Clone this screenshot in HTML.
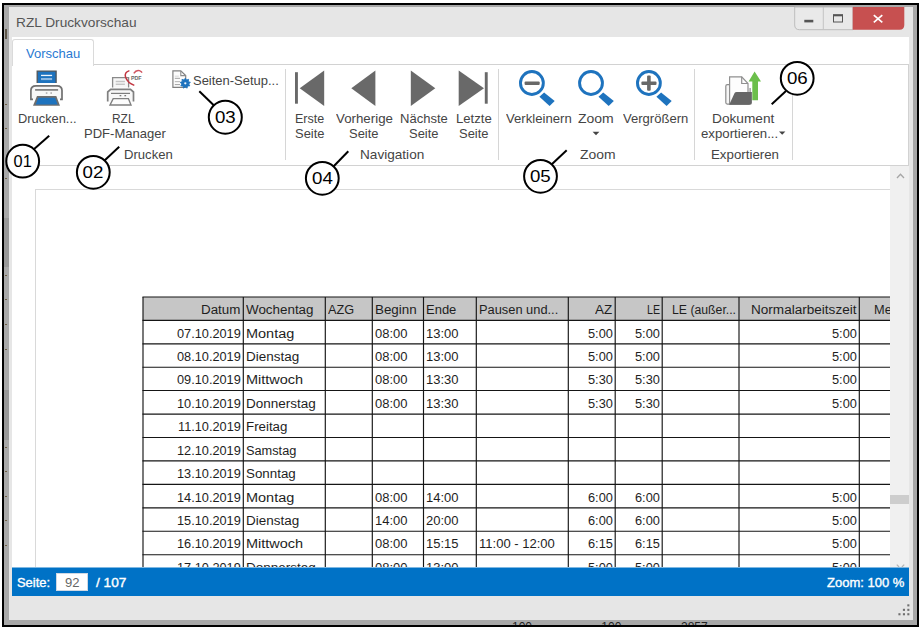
<!DOCTYPE html>
<html lang="de">
<head>
<meta charset="utf-8">
<title>RZL Druckvorschau</title>
<style>
html,body{margin:0;padding:0;background:#fff;}
body{width:922px;height:630px;position:relative;overflow:hidden;font-family:"Liberation Sans",sans-serif;}
.abs{position:absolute;}
.t{position:absolute;white-space:nowrap;line-height:20px;transform-origin:0 50%;font-family:"Liberation Sans",sans-serif;}
.tt{font-size:12.3px;color:#1e1e1e;}
.sb{-webkit-text-stroke:0.35px #fff;}
#frame{left:2px;top:3px;width:913px;height:620px;border:2px solid #000;background:#a8a8a8;}
#win{left:8.5px;top:7px;width:904px;height:613.3px;background:#e6e6e6;}
#client{left:12px;top:37px;width:897px;height:559.2px;background:#fff;}
#tab{left:12.4px;top:39px;width:79.3px;height:26px;border:1px solid #dadada;border-bottom:none;border-radius:3px 3px 0 0;background:#fff;}
#ribbon{left:12px;top:64px;width:896px;height:100px;border-top:1px solid #d2d2d2;border-bottom:1px solid #d2d2d2;border-right:1px solid #d2d2d2;}
.sep{position:absolute;top:69px;width:1px;height:91px;background:#d6d6d6;}
#viewer{left:12px;top:166px;width:878.3px;height:401.5px;overflow:hidden;background:#fff;}
#page{left:22.5px;top:23px;width:900px;height:500px;border-left:1px solid #d9d9d9;border-top:1px solid #d9d9d9;}
.hdr{position:absolute;background:#c6c6c6;}
.hl{position:absolute;height:1px;background:#1a1a1a;}
.vl{position:absolute;width:1px;background:#1a1a1a;}
#scroll{left:890.3px;top:166px;width:18.7px;height:401.5px;background:#f0f0f0;}
#thumb{left:890.3px;top:495px;width:18.7px;height:8.5px;background:#cdcdcd;}
#status{left:12px;top:567px;width:897px;height:28.2px;background:#0072c6;border-top:1px solid #7fb8e2;box-sizing:content-box;}
#pageinput{left:55.8px;top:572.5px;width:32.5px;height:18.3px;background:#fff;box-shadow:inset 0 0 0 1px #cfd8e3;}
#wbtns{left:794.7px;top:7px;width:109.6px;height:23px;}
</style>
</head>
<body>
<div id="frame" class="abs"></div>
<!-- background strip details -->
<div class="abs" style="left:4px;top:218px;width:4.5px;height:49px;background:#989898"></div>
<div class="abs" style="left:4px;top:390px;width:4.5px;height:50px;background:#989898"></div>
<div class="abs" style="left:4.6px;top:28.5px;width:2.6px;height:10px;background:#5e5648"></div>
<div class="abs" style="left:5px;top:103.5px;width:2.2px;height:1px;background:#6e5f45"></div>
<div class="abs" style="left:5px;top:127.5px;width:2.2px;height:1px;background:#6e5f45"></div>
<div class="abs" style="left:5px;top:177.5px;width:2.2px;height:1px;background:#6e5f45"></div>
<div class="abs" style="left:5px;top:275.0px;width:2.2px;height:1px;background:#6e5f45"></div>
<div class="abs" style="left:5px;top:299.1px;width:2.2px;height:1px;background:#6e5f45"></div>
<div class="abs" style="left:5px;top:324.1px;width:2.2px;height:1px;background:#6e5f45"></div>
<div class="abs" style="left:5px;top:348.5px;width:2.2px;height:1px;background:#6e5f45"></div>
<div class="abs" style="left:5px;top:446.5px;width:2.2px;height:1px;background:#6e5f45"></div>
<div class="abs" style="left:5px;top:471.0px;width:2.2px;height:1px;background:#6e5f45"></div>
<div class="abs" style="left:5px;top:495.5px;width:2.2px;height:1px;background:#6e5f45"></div>
<div class="abs" style="left:5px;top:520.0px;width:2.2px;height:1px;background:#6e5f45"></div>
<div class="abs" style="left:5px;top:544.5px;width:2.2px;height:1px;background:#6e5f45"></div>
<div id="win" class="abs"></div>
<div id="client" class="abs"></div>
<div id="ribbon" class="abs"></div>
<div id="tab" class="abs"></div>
<div class="sep" style="left:285.3px"></div>
<div class="sep" style="left:497.8px"></div>
<div class="sep" style="left:694px"></div>
<div class="sep" style="left:792px"></div>

<div id="viewer" class="abs">
  <div id="page" class="abs"></div>
<svg class="abs" style="left:0;top:0" width="879" height="402" viewBox="12 166 879 402">
<rect x="143" y="297" width="757" height="23.3" fill="#c6c6c6"/>
<g stroke="#151515" stroke-width="1.15">
<line x1="142.45" y1="297" x2="900" y2="297"/>
<line x1="142.45" y1="320.3" x2="900" y2="320.3"/>
<line x1="142.45" y1="343.8" x2="900" y2="343.8"/>
<line x1="142.45" y1="367.2" x2="900" y2="367.2"/>
<line x1="142.45" y1="390.5" x2="900" y2="390.5"/>
<line x1="142.45" y1="414.1" x2="900" y2="414.1"/>
<line x1="142.45" y1="437.5" x2="900" y2="437.5"/>
<line x1="142.45" y1="460.8" x2="900" y2="460.8"/>
<line x1="142.45" y1="484.4" x2="900" y2="484.4"/>
<line x1="142.45" y1="507.8" x2="900" y2="507.8"/>
<line x1="142.45" y1="531.2" x2="900" y2="531.2"/>
<line x1="142.45" y1="554.7" x2="900" y2="554.7"/>
<line x1="142.45" y1="578" x2="900" y2="578"/>
<line x1="143" y1="297" x2="143" y2="580"/>
<line x1="243.3" y1="297" x2="243.3" y2="580"/>
<line x1="325.3" y1="297" x2="325.3" y2="580"/>
<line x1="372.3" y1="297" x2="372.3" y2="580"/>
<line x1="423.5" y1="297" x2="423.5" y2="580"/>
<line x1="476.3" y1="297" x2="476.3" y2="580"/>
<line x1="568.3" y1="297" x2="568.3" y2="580"/>
<line x1="615.2" y1="297" x2="615.2" y2="580"/>
<line x1="662.2" y1="297" x2="662.2" y2="580"/>
<line x1="739" y1="297" x2="739" y2="580"/>
<line x1="859.3" y1="297" x2="859.3" y2="580"/>
<line x1="960" y1="297" x2="960" y2="580"/>
</g></svg>
<span class="t tt" style="left:189.33px;top:134px;transform:scaleX(1.0870)">Datum</span>
<span class="t tt" style="left:234.10px;top:134px;transform:scaleX(1.0890)">Wochentag</span>
<span class="t tt" style="left:316.10px;top:134px;transform:scaleX(1.0309)">AZG</span>
<span class="t tt" style="left:363.10px;top:134px;transform:scaleX(1.0877)">Beginn</span>
<span class="t tt" style="left:414.30px;top:134px;transform:scaleX(1.0569)">Ende</span>
<span class="t tt" style="left:467.10px;top:134px;transform:scaleX(1.0441)">Pausen und...</span>
<span class="t tt" style="left:583.39px;top:134px;transform:scaleX(1.0951)">AZ</span>
<span class="t tt" style="left:634.56px;top:134px;transform:scaleX(0.8667)">LE</span>
<span class="t tt" style="left:660.41px;top:134px;transform:scaleX(0.9960)">LE (außer...</span>
<span class="t tt" style="left:739.19px;top:134px;transform:scaleX(1.1026)">Normalarbeitszeit</span>
<span class="t tt" style="left:861.66px;top:134px;transform:scaleX(1.0390)">Mehrarbeit</span>
<span class="t tt" style="left:164.92px;top:158px;transform:scaleX(1.0364)">07.10.2019</span>
<span class="t tt" style="left:234.10px;top:158px;transform:scaleX(1.1771)">Montag</span>
<span class="t tt" style="left:363.10px;top:158px;transform:scaleX(1.0555)">08:00</span>
<span class="t tt" style="left:414.30px;top:158px;transform:scaleX(1.0555)">13:00</span>
<span class="t tt" style="left:575.73px;top:158px;transform:scaleX(1.0391)">5:00</span>
<span class="t tt" style="left:622.73px;top:158px;transform:scaleX(1.0391)">5:00</span>
<span class="t tt" style="left:819.83px;top:158px;transform:scaleX(1.0391)">5:00</span>
<span class="t tt" style="left:164.92px;top:181px;transform:scaleX(1.0364)">08.10.2019</span>
<span class="t tt" style="left:234.10px;top:181px;transform:scaleX(1.0952)">Dienstag</span>
<span class="t tt" style="left:363.10px;top:181px;transform:scaleX(1.0555)">08:00</span>
<span class="t tt" style="left:414.30px;top:181px;transform:scaleX(1.0555)">13:00</span>
<span class="t tt" style="left:575.73px;top:181px;transform:scaleX(1.0391)">5:00</span>
<span class="t tt" style="left:622.73px;top:181px;transform:scaleX(1.0391)">5:00</span>
<span class="t tt" style="left:819.83px;top:181px;transform:scaleX(1.0391)">5:00</span>
<span class="t tt" style="left:164.92px;top:204px;transform:scaleX(1.0364)">09.10.2019</span>
<span class="t tt" style="left:234.10px;top:204px;transform:scaleX(1.1765)">Mittwoch</span>
<span class="t tt" style="left:363.10px;top:204px;transform:scaleX(1.0555)">08:00</span>
<span class="t tt" style="left:414.30px;top:204px;transform:scaleX(1.0555)">13:30</span>
<span class="t tt" style="left:575.73px;top:204px;transform:scaleX(1.0391)">5:30</span>
<span class="t tt" style="left:622.73px;top:204px;transform:scaleX(1.0391)">5:30</span>
<span class="t tt" style="left:819.83px;top:204px;transform:scaleX(1.0391)">5:00</span>
<span class="t tt" style="left:164.92px;top:228px;transform:scaleX(1.0364)">10.10.2019</span>
<span class="t tt" style="left:234.10px;top:228px;transform:scaleX(1.0980)">Donnerstag</span>
<span class="t tt" style="left:363.10px;top:228px;transform:scaleX(1.0555)">08:00</span>
<span class="t tt" style="left:414.30px;top:228px;transform:scaleX(1.0555)">13:30</span>
<span class="t tt" style="left:575.73px;top:228px;transform:scaleX(1.0391)">5:30</span>
<span class="t tt" style="left:622.73px;top:228px;transform:scaleX(1.0391)">5:30</span>
<span class="t tt" style="left:819.83px;top:228px;transform:scaleX(1.0391)">5:00</span>
<span class="t tt" style="left:165.85px;top:251px;transform:scaleX(1.0364)">11.10.2019</span>
<span class="t tt" style="left:234.10px;top:251px;transform:scaleX(1.0822)">Freitag</span>
<span class="t tt" style="left:164.92px;top:275px;transform:scaleX(1.0364)">12.10.2019</span>
<span class="t tt" style="left:234.10px;top:275px;transform:scaleX(1.0370)">Samstag</span>
<span class="t tt" style="left:164.92px;top:298px;transform:scaleX(1.0364)">13.10.2019</span>
<span class="t tt" style="left:234.10px;top:298px;transform:scaleX(1.0854)">Sonntag</span>
<span class="t tt" style="left:164.92px;top:322px;transform:scaleX(1.0364)">14.10.2019</span>
<span class="t tt" style="left:234.10px;top:322px;transform:scaleX(1.1771)">Montag</span>
<span class="t tt" style="left:363.10px;top:322px;transform:scaleX(1.0555)">08:00</span>
<span class="t tt" style="left:414.30px;top:322px;transform:scaleX(1.0555)">14:00</span>
<span class="t tt" style="left:575.73px;top:322px;transform:scaleX(1.0391)">6:00</span>
<span class="t tt" style="left:622.73px;top:322px;transform:scaleX(1.0391)">6:00</span>
<span class="t tt" style="left:819.83px;top:322px;transform:scaleX(1.0391)">5:00</span>
<span class="t tt" style="left:164.92px;top:345px;transform:scaleX(1.0364)">15.10.2019</span>
<span class="t tt" style="left:234.10px;top:345px;transform:scaleX(1.0952)">Dienstag</span>
<span class="t tt" style="left:363.10px;top:345px;transform:scaleX(1.0555)">14:00</span>
<span class="t tt" style="left:414.30px;top:345px;transform:scaleX(1.0555)">20:00</span>
<span class="t tt" style="left:575.73px;top:345px;transform:scaleX(1.0391)">6:00</span>
<span class="t tt" style="left:622.73px;top:345px;transform:scaleX(1.0391)">6:00</span>
<span class="t tt" style="left:819.83px;top:345px;transform:scaleX(1.0391)">5:00</span>
<span class="t tt" style="left:164.92px;top:368px;transform:scaleX(1.0364)">16.10.2019</span>
<span class="t tt" style="left:234.10px;top:368px;transform:scaleX(1.1765)">Mittwoch</span>
<span class="t tt" style="left:363.10px;top:368px;transform:scaleX(1.0555)">08:00</span>
<span class="t tt" style="left:414.30px;top:368px;transform:scaleX(1.0555)">15:15</span>
<span class="t tt" style="left:467.10px;top:368px;transform:scaleX(1.0591)">11:00 - 12:00</span>
<span class="t tt" style="left:575.73px;top:368px;transform:scaleX(1.0391)">6:15</span>
<span class="t tt" style="left:622.73px;top:368px;transform:scaleX(1.0391)">6:15</span>
<span class="t tt" style="left:819.83px;top:368px;transform:scaleX(1.0391)">5:00</span>
<span class="t tt" style="left:164.92px;top:392px;transform:scaleX(1.0364)">17.10.2019</span>
<span class="t tt" style="left:234.10px;top:392px;transform:scaleX(1.0980)">Donnerstag</span>
<span class="t tt" style="left:363.10px;top:392px;transform:scaleX(1.0555)">08:00</span>
<span class="t tt" style="left:414.30px;top:392px;transform:scaleX(1.0555)">13:00</span>
<span class="t tt" style="left:575.73px;top:392px;transform:scaleX(1.0391)">5:00</span>
<span class="t tt" style="left:622.73px;top:392px;transform:scaleX(1.0391)">5:00</span>
<span class="t tt" style="left:819.83px;top:392px;transform:scaleX(1.0391)">5:00</span>
</div>
<div id="scroll" class="abs"></div>
<div id="thumb" class="abs"></div>
<div id="status" class="abs"></div>
<div id="pageinput" class="abs"></div>

<span class="t " style="left:16.29px;top:13px;transform:scaleX(1.1058);font-size:12.4px;color:#555">RZL Druckvorschau</span>
<span class="t " style="left:26.35px;top:44px;transform:scaleX(1.0104);font-size:12.9px;color:#2a7ad2">Vorschau</span>
<span class="t " style="left:17.95px;top:109px;transform:scaleX(1.0542);font-size:12.2px;color:#444">Drucken...</span>
<span class="t " style="left:112.22px;top:109px;transform:scaleX(0.9793);font-size:12.2px;color:#444">RZL</span>
<span class="t " style="left:83.63px;top:124px;transform:scaleX(1.0702);font-size:12.2px;color:#444">PDF-Manager</span>
<span class="t " style="left:123.83px;top:145px;transform:scaleX(1.0743);font-size:12.2px;color:#444">Drucken</span>
<span class="t " style="left:192.87px;top:71px;transform:scaleX(1.0646);font-size:12.2px;color:#444">Seiten-Setup...</span>
<span class="t " style="left:294.97px;top:109px;transform:scaleX(1.0259);font-size:12.2px;color:#444">Erste</span>
<span class="t " style="left:295.47px;top:124px;transform:scaleX(1.0617);font-size:12.2px;color:#444">Seite</span>
<span class="t " style="left:336.23px;top:109px;transform:scaleX(1.0913);font-size:12.2px;color:#444">Vorherige</span>
<span class="t " style="left:349.37px;top:124px;transform:scaleX(1.0617);font-size:12.2px;color:#444">Seite</span>
<span class="t " style="left:400.43px;top:109px;transform:scaleX(1.0682);font-size:12.2px;color:#444">Nächste</span>
<span class="t " style="left:409.37px;top:124px;transform:scaleX(1.0617);font-size:12.2px;color:#444">Seite</span>
<span class="t " style="left:455.92px;top:109px;transform:scaleX(1.0772);font-size:12.2px;color:#444">Letzte</span>
<span class="t " style="left:459.37px;top:124px;transform:scaleX(1.0617);font-size:12.2px;color:#444">Seite</span>
<span class="t " style="left:360.38px;top:145px;transform:scaleX(1.1157);font-size:12.2px;color:#444">Navigation</span>
<span class="t " style="left:505.73px;top:109px;transform:scaleX(1.0783);font-size:12.2px;color:#444">Verkleinern</span>
<span class="t " style="left:578.21px;top:109px;transform:scaleX(1.1471);font-size:12.2px;color:#444">Zoom</span>
<span class="t " style="left:622.93px;top:109px;transform:scaleX(1.0700);font-size:12.2px;color:#444">Vergrößern</span>
<span class="t " style="left:579.61px;top:145px;transform:scaleX(1.1405);font-size:12.2px;color:#444">Zoom</span>
<span class="t " style="left:712.08px;top:109px;transform:scaleX(1.1229);font-size:12.2px;color:#444">Dokument</span>
<span class="t " style="left:701.46px;top:124px;transform:scaleX(1.0849);font-size:12.2px;color:#444">exportieren...</span>
<span class="t " style="left:710.91px;top:145px;transform:scaleX(1.0909);font-size:12.2px;color:#444">Exportieren</span>
<span class="t sb" style="left:16.87px;top:573px;transform:scaleX(1.0610);font-size:12.2px;color:#fff">Seite:</span>
<span class="t " style="left:65.46px;top:573px;transform:scaleX(1.0720);font-size:12.2px;color:#666">92</span>
<span class="t sb" style="left:96.00px;top:573px;transform:scaleX(1.1208);font-size:12.2px;color:#fff">/ 107</span>
<span class="t sb" style="left:827.13px;top:573px;transform:scaleX(1.0676);font-size:12.2px;color:#fff">Zoom: 100 %</span>
<div class="abs" style="left:9px;top:620.6px;width:903px;height:4px;overflow:hidden">
  <span class="t" style="left:503px;top:-4px;font-size:12px;color:#222">100</span>
  <span class="t" style="left:585px;top:-4px;font-size:12px;color:#222">- 100</span>
  <span class="t" style="left:672px;top:-4px;font-size:12px;color:#222">2857</span>
</div>

<!-- icons + window buttons + annotations -->
<svg class="abs" style="left:0;top:0" width="922" height="630" viewBox="0 0 922 630">
  <!-- window buttons -->
  <path d="M794.7 7 V25 Q794.7 29.7 799.5 29.7 H853 V7 Z" fill="#e9e9e9" stroke="#bdbdbd" stroke-width="1"/>
  <line x1="823.3" y1="7" x2="823.3" y2="29.5" stroke="#c4c4c4" stroke-width="1"/>
  <path d="M852.7 7 H904.3 V25 Q904.3 29.7 899.5 29.7 H852.7 Z" fill="#c75050"/>
  <rect x="804.3" y="19.8" width="9" height="2.6" fill="#555"/>
  <rect x="833.5" y="15" width="9" height="7" fill="none" stroke="#555" stroke-width="1"/>
  <rect x="833" y="14.3" width="10" height="2" fill="#555"/>
  <path d="M873.8 15.2 L882.3 22.4 M882.3 15.2 L873.8 22.4" stroke="#fff" stroke-width="1.7" fill="none"/>

  <!-- print icon -->
  <g id="ic-print">
    <path d="M37.2 83 V71.1 H56.1 V83" fill="#1e73be" stroke="#4f5458" stroke-width="1.3"/>
    <rect x="41" y="74.8" width="11.1" height="1.3" fill="#f2f6fb"/>
    <rect x="41" y="78" width="11.1" height="2.1" fill="#8db9e2"/>
    <path d="M33 99.4 H30.9 V90.5 Q30.9 85.8 36 85.8 H57 Q62 85.8 62 90.5 V99.4 H60" fill="#f7f7f7" stroke="#707070" stroke-width="1.7"/>
    <rect x="35.1" y="89" width="23" height="1.8" fill="#858585"/>
    <rect x="45.8" y="92.3" width="1.6" height="1.5" fill="#aaa"/>
    <rect x="50.4" y="92.3" width="1.6" height="1.5" fill="#aaa"/>
    <path d="M37 95.9 H56.3 L60 105.8 H33 Z" fill="#6e6e6e"/>
    <path d="M38.3 97.7 H55.1 L57.6 104.4 H35.7 Z" fill="#1e73be"/>
  </g>
  <!-- pdf manager icon -->
  <g id="ic-pdf">
    <path d="M112.6 87.6 V77.6 H128.6 V87.6" fill="#f6f6f6" stroke="#8a8a8a" stroke-width="1.3"/>
    <rect x="115.7" y="80.8" width="9.2" height="1.4" fill="#c4c4c4"/>
    <rect x="115.7" y="83.7" width="9.2" height="1" fill="#b0b0b0"/>
    <path d="M107.7 101.6 V92 L110.7 89.4 H130.5 L133.5 92 V101.6" fill="#f7f7f7" stroke="#808080" stroke-width="1.7"/>
    <rect x="111" y="92.8" width="19" height="1.2" fill="#7c7c7c"/>
    <rect x="119.6" y="95" width="1.7" height="1.3" fill="#777"/>
    <rect x="124.4" y="95" width="1.7" height="1.3" fill="#777"/>
    <path d="M113.2 98.6 H128.4 L131 105 H110 Z" fill="#fdfdfd" stroke="#808080" stroke-width="1.4"/>
    <path d="M129.4 70.6 Q124 72.2 125.6 77.2 Q127.6 82.8 134.3 85.4" fill="none" stroke="#c23540" stroke-width="1.5"/>
    <path d="M133.8 73.4 Q136.2 69.6 139.4 70.6 Q141.4 71.2 142 72.6" fill="none" stroke="#d05560" stroke-width="1.5"/>
    <text x="131" y="80.2" font-family="Liberation Sans, sans-serif" font-size="5.6" font-weight="700" fill="#666" textLength="10.6" lengthAdjust="spacingAndGlyphs">PDF</text>
  </g>
  <!-- page setup icon -->
  <g id="ic-setup">
    <path d="M172.9 70.9 H180.8 L185.7 75.6 V87.3 H172.9 Z" fill="#fcfcfc" stroke="#808080" stroke-width="1.2"/>
    <path d="M180.8 70.9 V75.6 H185.7" fill="none" stroke="#8c8c8c" stroke-width="1.1"/>
    <rect x="174.8" y="75.7" width="4" height="0.9" fill="#d5d5d5"/>
    <rect x="174.8" y="77.8" width="5.2" height="1.1" fill="#aaa"/>
    <rect x="174.8" y="81" width="5.2" height="1.2" fill="#bdbdbd"/>
    <rect x="174.8" y="84" width="5.2" height="1.1" fill="#aaa"/>
    <polygon points="185.30,78.10 186.50,80.01 188.64,79.32 188.33,81.55 190.42,82.40 188.75,83.91 189.80,85.90 187.55,85.98 187.08,88.19 185.30,86.80 183.52,88.19 183.05,85.98 180.80,85.90 181.85,83.91 180.18,82.40 182.27,81.55 181.96,79.32 184.10,80.01" fill="#1e73be" stroke="#1e73be" stroke-width="0.8" stroke-linejoin="round"/>
    <circle cx="185.3" cy="83.3" r="1.15" fill="#eef4fb"/>
  </g>
  <!-- navigation icons -->
  <g fill="#696969">
    <rect x="295" y="72.2" width="2.9" height="31.5"/>
    <path d="M299.7 88.2 L324.2 70.6 V105.9 Z"/>
    <path d="M351.3 88.2 L375.4 70.6 V105.9 Z"/>
    <path d="M435.3 88.2 L410.8 70.6 V105.9 Z"/>
    <path d="M484 88.2 L458.7 70.6 V105.9 Z"/>
    <rect x="484.8" y="72.2" width="2.9" height="31.5"/>
  </g>
  <!-- zoom icons -->
  <g id="ic-zoomout">
    <circle cx="531.9" cy="83" r="11.45" fill="#fff" stroke="#1e73be" stroke-width="2.9"/>
    <polygon points="544.1,92.6 554.7,100.9 549.6,106.0 539.4,96.8" fill="#1e73be"/>
    <rect x="524.6" y="81.4" width="15.1" height="3.6" rx="1" fill="#686868"/>
  </g>
  <g id="ic-zoom">
    <circle cx="591.0" cy="83" r="11.45" fill="#fff" stroke="#1e73be" stroke-width="2.9"/>
    <polygon points="603.2,92.6 613.8,100.9 608.7,106.0 598.5,96.8" fill="#1e73be"/>
    
  </g>
  <g id="ic-zoomin">
    <circle cx="648.9" cy="83" r="11.45" fill="#fff" stroke="#1e73be" stroke-width="2.9"/>
    <polygon points="661.1,92.6 671.7,100.9 666.6,106.0 656.4,96.8" fill="#1e73be"/>
    <rect x="641.4" y="81.4" width="15.1" height="3.6" rx="1" fill="#686868"/><rect x="647.1" y="75.6" width="3.6" height="15.1" rx="1" fill="#686868"/>
  </g>
  <path d="M592.6 131.8 H599.4 L596 135.2 Z" fill="#444"/>
  <path d="M779 131.4 H785.4 L782.2 134.7 Z" fill="#444"/>
  <!-- export icon -->
  <g id="ic-export">
    <path d="M729.4 84.6 H727.3 Q725.8 84.6 725.8 86.2 V102.6 Q725.8 104.1 727.3 104.1 H749 Q750.1 104.1 750.1 102.6 V88" fill="#f6f6f6" stroke="#8d8d8d" stroke-width="1.2"/>
    <path d="M729.6 104 V76.8 H741.7 L748 83.5 V104 Z" fill="#fdfdfd" stroke="#909090" stroke-width="1.2"/>
    <path d="M741.7 76.8 V83.5 H748" fill="none" stroke="#909090" stroke-width="1.2"/>
    <path d="M736.6 91.9 H751.9 V102.8 Q751.9 104.7 750 104.7 H729.2 L734.6 93 Q735.2 91.9 736.6 91.9 Z" fill="#666"/>
    <path d="M754.6 71.6 L761 81.5 H758 V100.2 H752.3 V81.5 H748.6 Z" fill="#6cbf4b"/>
  </g>
  <!-- scrollbar arrows -->
  <path d="M897 178 L900.5 174.2 L904 178" fill="none" stroke="#a6a6a6" stroke-width="1.3"/>
  <path d="M896.8 564.6 L899.1 567 M904.2 564.6 L901.9 567" fill="none" stroke="#b4b4b4" stroke-width="1.2"/>
  <!-- resize grip -->
  <g fill="#707070">
    <rect x="907.3" y="604.3" width="2.1" height="2.1"/><rect x="902.9" y="608.8" width="2.1" height="2.1"/><rect x="907.3" y="608.8" width="2.1" height="2.1"/><rect x="898.4" y="613.2" width="2.1" height="2.1"/><rect x="902.9" y="613.2" width="2.1" height="2.1"/><rect x="907.3" y="613.2" width="2.1" height="2.1"/>
  </g>
  <!-- annotations -->
  <g fill="#fff" stroke="#000" stroke-width="2">
    <line x1="49.2" y1="135.8" x2="33" y2="150"/>
    <line x1="119.2" y1="146.7" x2="104" y2="161"/>
    <line x1="199.3" y1="91.3" x2="214" y2="105.5"/>
    <line x1="348.3" y1="151.3" x2="333" y2="167"/>
    <line x1="566.7" y1="150.3" x2="551" y2="165"/>
    <line x1="771.7" y1="104.2" x2="786" y2="91"/>
    <circle cx="22.7" cy="161.2" r="16.4"/>
    <circle cx="93.3" cy="172.3" r="16.4"/>
    <circle cx="225.3" cy="117.2" r="16.5"/>
    <circle cx="322.3" cy="178.3" r="16.4"/>
    <circle cx="540.5" cy="176.3" r="16.4"/>
    <circle cx="797.2" cy="78.3" r="16.4"/>
  </g>
  <g font-family="Liberation Sans, sans-serif" font-size="16.6" fill="#000">
    <text x="13.6" y="166.9" textLength="18.2" lengthAdjust="spacingAndGlyphs">01</text>
    <text x="82.6" y="178.1" textLength="20.8" lengthAdjust="spacingAndGlyphs">02</text>
    <text x="214.9" y="123" textLength="20.8" lengthAdjust="spacingAndGlyphs">03</text>
    <text x="312.1" y="184.3" textLength="20.8" lengthAdjust="spacingAndGlyphs">04</text>
    <text x="529.9" y="182.1" textLength="20.8" lengthAdjust="spacingAndGlyphs">05</text>
    <text x="786.9" y="84.3" textLength="20.8" lengthAdjust="spacingAndGlyphs">06</text>
  </g>
</svg>
</body>
</html>
